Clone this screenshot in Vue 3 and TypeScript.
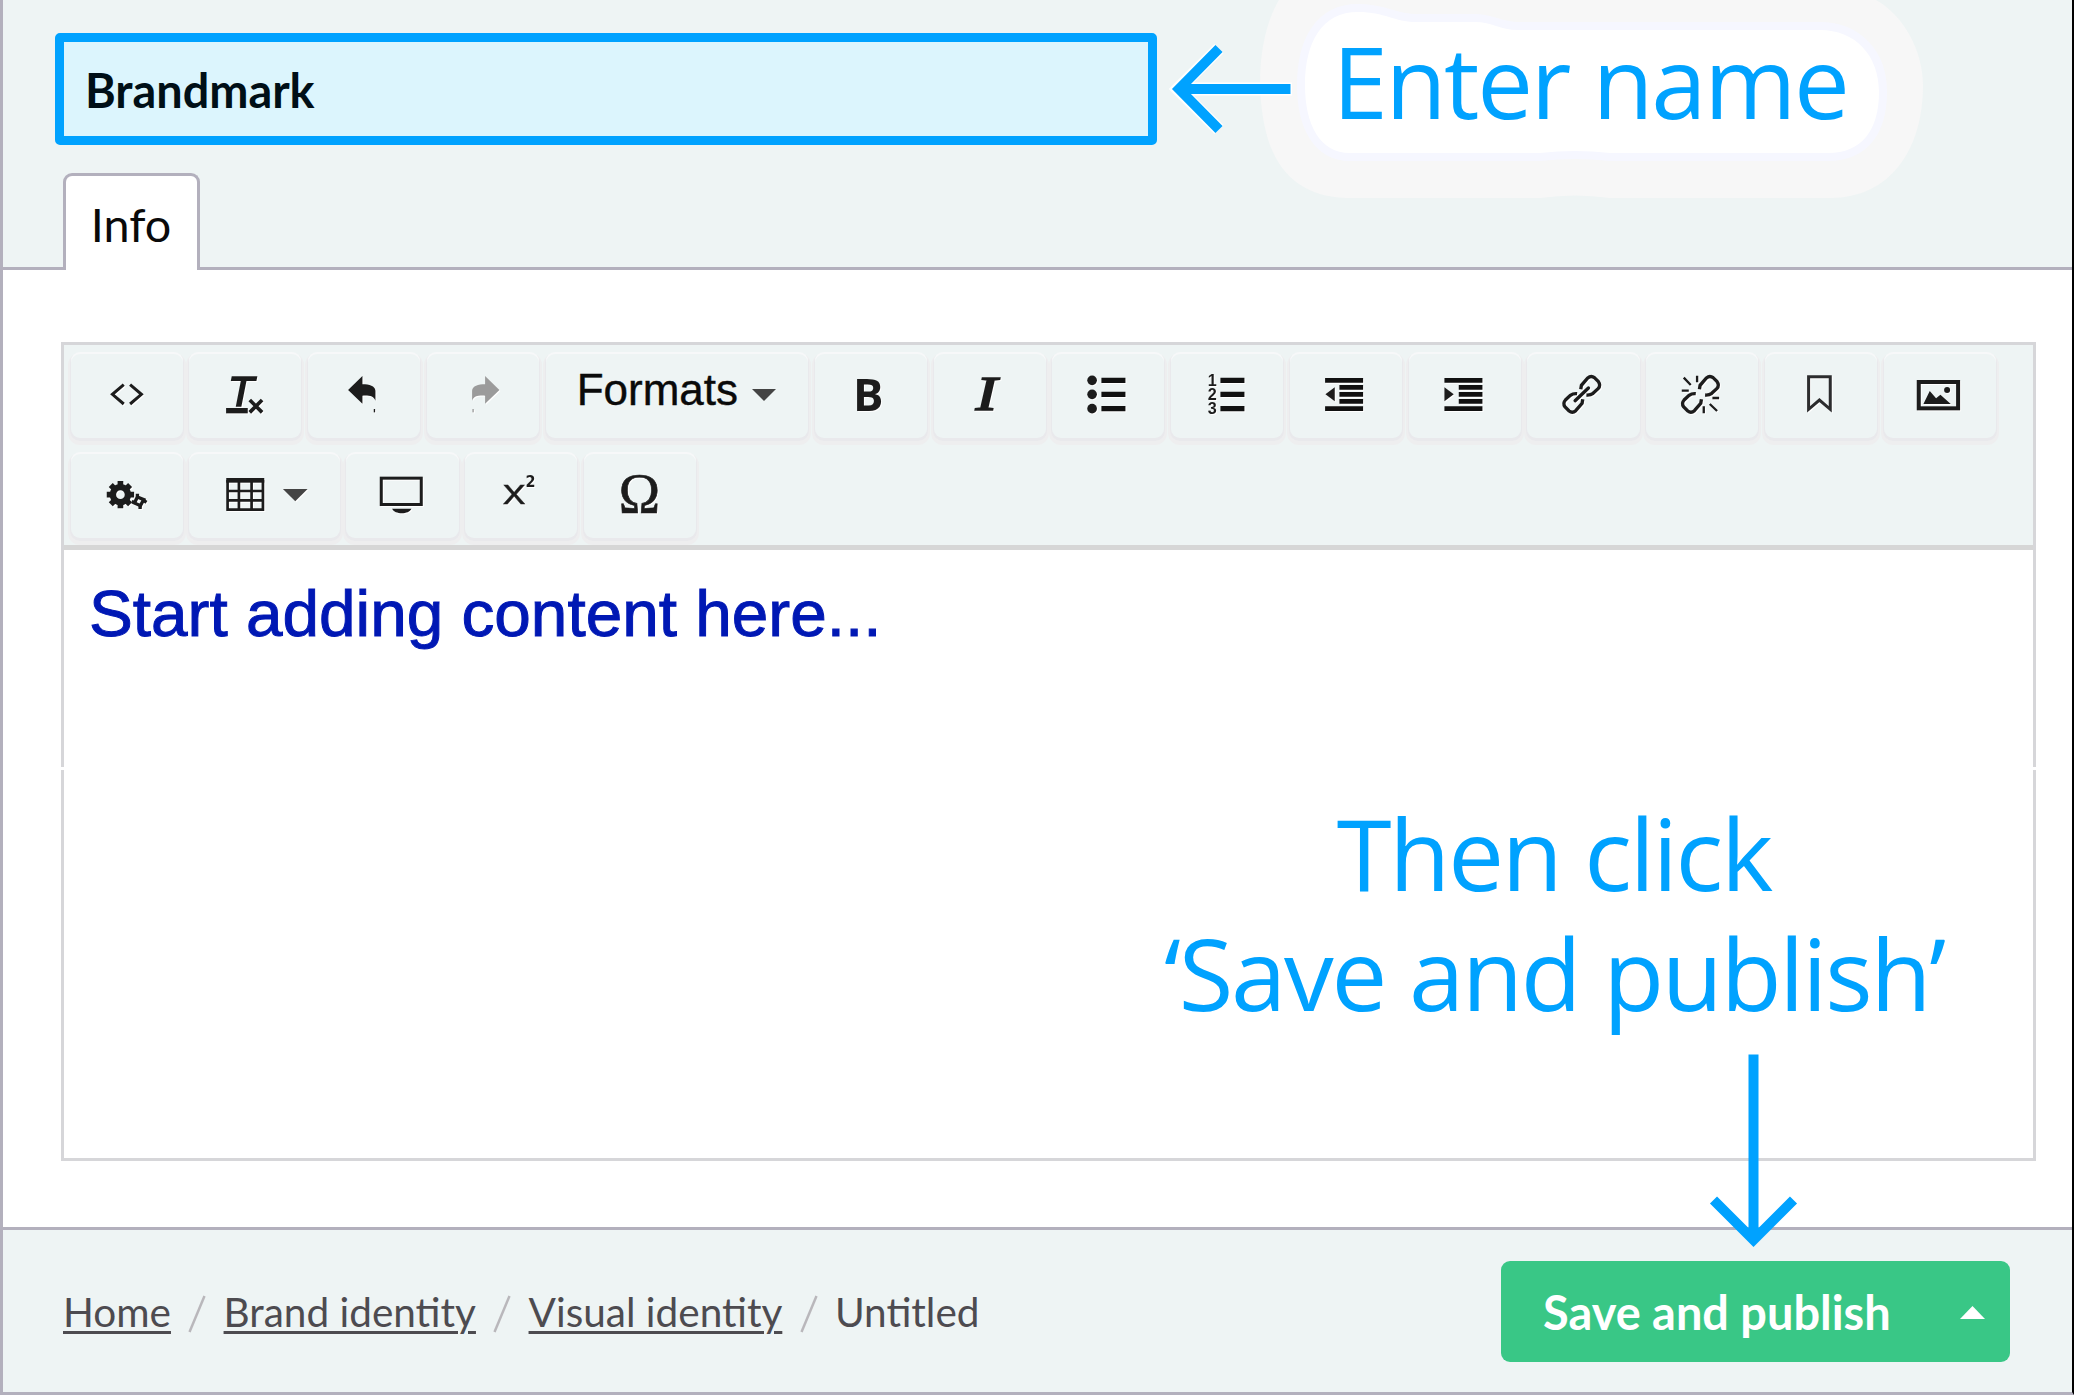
<script setup lang="ts">
interface Tool {
  id: string
  box: string
  shapes: string
  label?: string
  wide?: boolean
  disabled?: boolean
}

const BACK_ARROW =
  '<path d="M894 180L937 138V163C958 163 975 168 976 182V212C971 199 960 196 937 197V221Z"/><rect x="971" y="237" width="4" height="10"/>'
const LINK_HALF =
  'M182 133L184 121L203 99Q213 90 223 98L235 110Q243 121 234 131L219 145Q211 151 199 150'

const firstRow: Tool[] = [
  {
    id: 'source',
    box: '63 66 336 264',
    shapes:
      '<path d="M221 164L187 193L221 222M240 164L274 193L240 222" fill="none" stroke="#1c1c1c" stroke-width="9"/>',
  },
  {
    id: 'clear',
    box: '418 66 336 264',
    shapes:
      '<text x="535" y="227" font-family="Liberation Sans, sans-serif" font-style="italic" font-size="127" stroke="#1c1c1c" stroke-width="5">T</text><path d="M529 242H594" stroke="#1c1c1c" stroke-width="16"/><path d="M600 210L637 247M637 210L600 247" stroke="#1c1c1c" stroke-width="11"/>',
  },
  { id: 'undo', box: '774 66 336 264', shapes: BACK_ARROW },
  {
    id: 'redo',
    box: '1131 66 336 264',
    disabled: true,
    shapes: `<g transform="translate(2242 0) scale(-1 1)">${BACK_ARROW}</g>`,
  },
  { id: 'formats', box: '', shapes: '', label: 'Formats' },
  {
    id: 'bold',
    box: '855 66 336 264',
    shapes:
      '<text x="969" y="242" font-family="Open Sans, sans-serif" font-weight="700" font-size="136">B</text>',
  },
  {
    id: 'italic',
    box: '1211 66 336 264',
    shapes:
      '<text transform="translate(1336 240) scale(1.340 1)" font-family="Liberation Serif, serif" font-style="italic" font-size="143" stroke="#1c1c1c" stroke-width="5">I</text>',
  },
  {
    id: 'bullets',
    box: '127 66 336 264',
    shapes:
      '<circle cx="247" cy="151" r="14.500"/><circle cx="247" cy="193" r="14.500"/><circle cx="247" cy="236" r="14.500"/><path d="M275 151H347M275 193H347M275 236H347" stroke="#111" stroke-width="16"/>',
  },
  {
    id: 'numbers',
    box: '483 66 336 264',
    shapes:
      '<g font-family="Liberation Sans, sans-serif" font-weight="700" font-size="47"><text x="593" y="167" textLength="27" lengthAdjust="spacingAndGlyphs">1</text><text x="593" y="209" textLength="27" lengthAdjust="spacingAndGlyphs">2</text><text x="593" y="251" textLength="27" lengthAdjust="spacingAndGlyphs">3</text></g><path d="M631 151H703M631 193H703M631 236H703" stroke="#111" stroke-width="16"/>',
  },
  {
    id: 'outdent',
    box: '840 66 336 264',
    shapes:
      '<path d="M945 151H1059M988 172H1059M988 193H1059M988 214H1059M945 236H1059" stroke="#111" stroke-width="14"/><path d="M946 193L974 172V214Z"/>',
  },
  {
    id: 'indent',
    box: '1196 66 336 264',
    shapes:
      '<path d="M1302 151H1416M1345 172H1416M1345 193H1416M1345 214H1416M1302 236H1416" stroke="#111" stroke-width="14"/><path d="M1330 193L1302 172V214Z"/>',
  },
  {
    id: 'link',
    box: '21 21 336 264',
    shapes: `<g fill="none" stroke="#1c1c1c" stroke-width="10"><path d="${LINK_HALF}"/><path d="${LINK_HALF}" transform="rotate(180 185 148)"/><path d="M165 167L205 129" stroke-linecap="round"/></g>`,
  },
  {
    id: 'unlink',
    box: '378 21 336 264',
    shapes: `<g fill="none" stroke="#1c1c1c" stroke-width="10"><path d="${LINK_HALF}" transform="translate(356 0)"/><path d="${LINK_HALF}" transform="translate(356 0) rotate(180 185 148)"/><path d="M491 98L512 120M531 92V112M485 137H506M577 159H597M551 184V205M569 177L591 198" stroke-width="7"/></g>`,
  },
  {
    id: 'anchor',
    box: '735 21 336 264',
    shapes:
      '<path d="M865.500 95H930.500V193L898 165L865.500 193Z" fill="none" stroke="#2c2c2e" stroke-width="9"/>',
  },
  {
    id: 'image',
    box: '1091 21 336 264',
    shapes:
      '<rect x="1195" y="111" width="118" height="79" fill="none" stroke="#1c1c1c" stroke-width="12"/><circle cx="1280" cy="135" r="9"/><path d="M1209 177L1228 138L1247 160L1260 149L1291 177Z"/>',
  },
]

const gearTeeth = [0, 45, 90, 135]
  .map((a) => `<path d="M211 453V475M211 513V535" stroke="#1c1c1c" stroke-width="17" transform="rotate(${a} 211 494)"/>`)
  .join('')

const secondRow: Tool[] = [
  {
    id: 'macro',
    box: '63 366 336 264',
    shapes: `${gearTeeth}<circle cx="211" cy="494" r="22.500" fill="none" stroke="#1c1c1c" stroke-width="19"/><path d="M262 501L281 509L271 527L253 519Z" fill="none" stroke="#1c1c1c" stroke-width="10"/><path d="M262 491V500M289 517L282 512M270 537V528M245 515L254 518" stroke="#1c1c1c" stroke-width="10"/>`,
  },
  {
    id: 'table',
    box: '418 366 450 264',
    wide: true,
    shapes:
      '<path d="M533 450V539H639V450M567 450V539M605 450V539M533 483H639M533 511H639" fill="none" stroke="#1c1c1c" stroke-width="8"/><rect x="529" y="444" width="114" height="14"/><path d="M699 477H773L736 514Z" fill="#444"/>',
  },
  {
    id: 'media',
    box: '888 366 336 264',
    shapes:
      '<rect x="993.500" y="444.500" width="120" height="79" fill="none" stroke="#1c1c1c" stroke-width="9"/><path d="M1026 536H1084C1076 554 1034 554 1026 536Z"/>',
  },
  {
    id: 'superscript',
    box: '1245 366 336 264',
    shapes:
      '<text x="1357" y="522" font-family="Open Sans, sans-serif" font-size="106" stroke="#1c1c1c" stroke-width="1" textLength="70" lengthAdjust="spacingAndGlyphs">x</text><text x="1426" y="472" font-family="DejaVu Sans, sans-serif" font-weight="700" font-size="47" textLength="30" lengthAdjust="spacingAndGlyphs">2</text>',
  },
  {
    id: 'special',
    box: '160 366 336 264',
    shapes:
      '<text x="264" y="550" font-family="Liberation Serif, serif" font-size="168" stroke="#1c1c1c" stroke-width="2" textLength="124" lengthAdjust="spacingAndGlyphs">Ω</text>',
  },
]

const rows: Tool[][] = [firstRow, secondRow]
const crumbs: string[] = ['Home', 'Brand identity', 'Visual identity']
</script>

<template>
  <div class="page">
    <header class="head">
      <div class="name-field">Brandmark</div>
      <div class="tab">Info</div>
    </header>

    <main class="main">
      <section class="editor">
        <div class="toolbar">
          <div v-for="(row, i) in rows" :key="i" class="tool-row">
            <div
              v-for="tool in row"
              :key="tool.id"
              class="tool"
              :class="{ wide: tool.wide, formats: tool.label, disabled: tool.disabled }"
            >
              <template v-if="tool.label">
                <span class="formats-label">{{ tool.label }}</span>
                <svg class="caret" viewBox="0 0 24 12"><path d="M0 0H24L12 12Z" /></svg>
              </template>
              <svg v-else class="icon" :viewBox="tool.box" v-html="tool.shapes"></svg>
            </div>
          </div>
        </div>
        <div class="content">Start adding content here...</div>
        <i class="seam"></i>
      </section>
    </main>

    <footer class="foot">
      <nav class="crumbs">
        <template v-for="crumb in crumbs" :key="crumb">
          <a>{{ crumb }}</a>
          <svg class="slash" viewBox="0 0 18 38"><path d="M16.500 1L1.500 37" /></svg>
        </template>
        <span>Untitled</span>
      </nav>
      <div class="publish">
        <span>Save and publish</span>
        <svg viewBox="0 0 25 13"><path d="M0 13L12.500 0L25 13Z" /></svg>
      </div>
    </footer>

    <svg class="overlay" viewBox="0 0 2074 1395">
      <path
        fill="#f7f7f7"
        d="M1279 0C1254 42 1257 110 1270 145C1283 180 1310 197 1346 198H1540Q1575 193 1610 198H1830C1890 198 1923 150 1923 85C1923 50 1903 15 1876 0Z"
      />
      <path
        fill="#fff"
        stroke="#f6f7ff"
        stroke-width="16"
        paint-order="stroke"
        d="M1305 85C1305 42 1322 12 1358 12C1385 12 1395 22 1415 22H1475C1492 22 1500 30 1518 30H1820C1855 30 1879 55 1879 92C1879 130 1862 153 1828 153H1610Q1575 149 1540 153H1350C1320 153 1305 125 1305 85Z"
      />
      <g fill="none" stroke="#fff" stroke-width="13">
        <path d="M1292 89H1182M1219 48.500L1178 89L1219 129.500" />
      </g>
      <g fill="none" stroke="#00a2ff" stroke-width="10">
        <path d="M1290.500 89H1180M1219 48.500L1179 89L1219 129.500" />
        <path d="M1753.500 1054.500V1238M1713.500 1200L1753.500 1240L1793.500 1200" />
      </g>
    </svg>
    <div class="note note-name">Enter name</div>
    <div class="note note-save">Then click<br />‘Save and publish’</div>
  </div>
</template>

<style>
body {
  margin: 0;
}
</style>

<style scoped>
.page {
  position: relative;
  box-sizing: border-box;
  width: 2074px;
  height: 1395px;
  display: flex;
  flex-direction: column;
  overflow: hidden;
  background: #fff;
  border-left: 3px solid #b3b0bd;
  border-right: 2px solid #000;
  border-bottom: 3px solid #b3b0bd;
  font-family: Lato, sans-serif;
}
.head {
  box-sizing: border-box;
  height: 270px;
  padding: 33px 0 0 52px;
  background: #eef4f4;
  border-bottom: 3px solid #b3b0bd;
}
.name-field {
  box-sizing: border-box;
  width: 1101.500px;
  height: 112px;
  display: flex;
  align-items: center;
  padding: 2px 0 0 21px;
  border: 9px solid #00a2ff;
  border-radius: 5px;
  background: #dcf5fd;
  color: #000f17;
  font-size: 46.800px;
  font-weight: 700;
  line-height: 55px;
}
.tab {
  box-sizing: border-box;
  width: 137px;
  height: 97px;
  margin: 28px 0 0 8px;
  padding: 21px 1px 0 0;
  border: 3px solid #b3b0bd;
  border-bottom: 0;
  border-radius: 9px 9px 0 0;
  background: #fff;
  color: #0a0a0a;
  font-size: 46.700px;
  line-height: 55px;
  text-align: center;
}
.main {
  flex: 1;
  padding: 72px 36px 66px 58px;
  display: flex;
}
.editor {
  position: relative;
  box-sizing: border-box;
  flex: 1;
  border: 3px solid #d6d6d9;
}
.toolbar {
  box-sizing: border-box;
  height: 205px;
  padding: 7px 0 0 6.500px;
  background: #eef4f4;
  border-bottom: 5px solid #d6d6d6;
}
.tool-row {
  display: flex;
  gap: 6.600px;
  height: 100px;
}
.tool {
  width: 112.200px;
  height: 86px;
  flex: none;
  border-radius: 9px;
  background: #eef4f4;
  box-shadow:
    inset 0 2px 0 #f7f8f9,
    0 2px 0 1px #e9e9ec,
    0 4px 0 3px #eeeeef;
}
.tool.wide {
  width: 150.500px;
}
.tool.formats {
  display: flex;
  width: 262.500px;
}
.icon {
  display: block;
  width: 100%;
  height: 88px;
  fill: #1c1c1c;
  filter: drop-shadow(1.500px 1.500px 0 #fff);
}
.disabled .icon {
  fill: #9b9b9b;
}
.formats-label {
  padding-left: 31px;
  font-family: 'Liberation Sans', sans-serif;
  font-size: 44px;
  line-height: 50px;
  margin-top: 13px;
  height: 50px;
  color: #0a0a0a;
  -webkit-text-stroke: 0.400px #0a0a0a;
}
.caret {
  width: 24px;
  height: 12px;
  margin: 37px 0 0 14px;
  fill: #444;
}
.content {
  padding: 26px 0 0 25px;
  font-family: 'Liberation Sans', sans-serif;
  font-size: 65.700px;
  line-height: 76px;
  color: #0018b4;
  -webkit-text-stroke: 1px #0018b4;
}
.seam {
  position: absolute;
  left: -3px;
  right: -3px;
  top: 422px;
  height: 3px;
  background: #fff;
}
.foot {
  box-sizing: border-box;
  height: 165px;
  display: flex;
  align-items: center;
  justify-content: space-between;
  padding: 0 62px 0 60px;
  border-top: 3px solid #b3b0bd;
  background: #eef4f4;
}
.crumbs {
  display: flex;
  align-items: center;
  padding-top: 1px;
  color: #4d4b50;
  font-size: 40.500px;
  line-height: 48px;
}
.crumbs a {
  text-decoration: underline;
  text-decoration-thickness: 3px;
  text-underline-offset: 4px;
}
.slash {
  width: 18px;
  height: 38px;
  margin: 4px 17.300px 0 17.300px;
  fill: none;
  stroke: #b9b7bb;
  stroke-width: 2.500px;
}
.publish {
  box-sizing: border-box;
  width: 509.500px;
  height: 101px;
  display: flex;
  align-items: center;
  justify-content: space-between;
  padding: 2px 25px 0 42.500px;
  border-radius: 9px;
  background: #39c786;
  color: #fff;
  font-size: 46.900px;
  font-weight: 700;
  line-height: 55px;
  white-space: nowrap;
}
.publish svg {
  width: 25px;
  height: 13px;
  fill: #fff;
}
.overlay {
  position: absolute;
  left: -3px;
  top: 0;
  width: 2074px;
  height: 1395px;
}
.note {
  position: absolute;
  font-family: 'Open Sans', sans-serif;
  font-size: 99.500px;
  line-height: 120px;
  color: #00a2ff;
  white-space: nowrap;
  text-align: center;
}
.note-name {
  left: 1329.500px;
  top: 20.500px;
  letter-spacing: -2.350px;
}
.note-save {
  left: 1161px;
  top: 792.500px;
  letter-spacing: -2.200px;
}
</style>
